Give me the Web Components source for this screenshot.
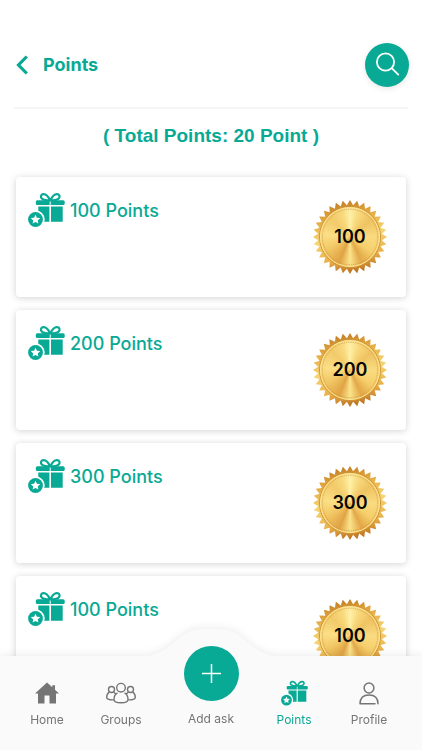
<!DOCTYPE html>
<html lang="en">
<head>
<meta charset="utf-8">
<meta name="viewport" content="width=device-width, initial-scale=1">
<title>Points</title>
<style>
  html, body { height: 100%; margin: 0; }
  body {
    --brand: #08a995;
    --muted: #757575;
    --bar: #fafafa;
    background: #fff;
    font-family: Inter, "Open Sans", sans-serif;
  }
</style>
</head>
<body>
<points-app></points-app>
<script>
const define = (name, html, setup) => {
  const template = document.createElement('template');
  template.innerHTML = html;
  customElements.define(name, class extends HTMLElement {
    connectedCallback() {
      if (this.shadowRoot) return;
      this.attachShadow({ mode: 'open' }).append(template.content.cloneNode(true));
      if (setup) setup(this, this.shadowRoot);
    }
  });
};

/* Gift box with a star badge */
define('gift-icon', `
  <style>
    :host { display: block; width: 37px; flex: none; color: var(--brand); }
    svg { display: block; width: 100%; }
  </style>
  <svg viewBox="0 0 37 36" fill="currentColor" aria-hidden="true">
    <path d="M22 8.300C20 4 17.500 2 15.300 2.200c-2.600.2-3.200 3.300-1.200 4.600C15.800 8 19 8.300 22 8.300ZM22.500 8.300C24.500 4 27 2 29.200 2.200c2.600.2 3.200 3.300 1.200 4.600C28.700 8 25.500 8.300 22.500 8.300Z" fill="none" stroke="currentColor" stroke-width="2.200"/>
    <path d="M9.300 8.300H21.700V13H9.300A1.500 1.500 0 0 1 7.800 11.500V9.800A1.500 1.500 0 0 1 9.300 8.300ZM22.700 8.300H35.200A1.500 1.500 0 0 1 36.700 9.800V11.500A1.500 1.500 0 0 1 35.200 13H22.700Z"/>
    <path d="M10.300 14.500H21.400V29.700H10.300ZM23 14.500H34.700V29.700H23Z"/>
    <circle cx="7.500" cy="27.500" r="9.200" fill="var(--gift-bg, #fff)"/>
    <circle cx="7.500" cy="27.500" r="7.400"/>
    <path fill="var(--gift-bg, #fff)" d="M7.500 22.700l1.400 3 3.300.4-2.400 2.300.6 3.200-2.900-1.600-2.900 1.600.6-3.200-2.400-2.300 3.300-.4z"/>
  </svg>`);

/* Serrated gold seal with the value in the middle */
define('gold-medal', `
  <style>
    :host { display: grid; width: 74px; height: 74px; flex: none; place-items: center; }
    svg, span { grid-area: 1 / 1; }
    svg { width: 100%; height: 100%; }
    span { z-index: 1; color: #090703; font-size: 18px; line-height: 24px; font-weight: 600; }
    .face {
      grid-area: 1 / 1; width: 60px; height: 60px; border-radius: 50%;
      background:
        radial-gradient(circle, transparent 55%, #d6922a33 100%),
        conic-gradient(#fff0a8, #f8da7e 20deg, #efc362 50deg, #fadb80 90deg, #f6cf6c 125deg, #e3a848 155deg, #fbe48c 180deg, #e0a344 203deg, #f2c765 240deg, #fbdf86 275deg, #f2ca6a 315deg, #f8da7e 342deg, #fff0a8);
    }
  </style>
  <svg viewBox="0 0 74 74" aria-hidden="true">
    <defs>
      <linearGradient id="edge" x1=".35" y1="0" x2=".55" y2="1">
        <stop offset="0" stop-color="#bf7a20"/><stop offset=".22" stop-color="#e3a840"/>
        <stop offset=".5" stop-color="#f7d574"/><stop offset=".78" stop-color="#e9b04a"/>
        <stop offset="1" stop-color="#b86c1b"/>
      </linearGradient>
    </defs>
    <polygon fill="url(#edge)"/>
  </svg>
  <div class="face"></div>
  <svg viewBox="0 0 74 74" fill="none" aria-hidden="true">
    <circle cx="37" cy="37" r="30.500" stroke="#d09638" stroke-width="1"/>
    <circle cx="37" cy="37" r="29.500" stroke="#ffe596" stroke-width="1"/>
    <circle cx="37" cy="37" r="27.800" stroke="#c98f33" stroke-width=".7" stroke-dasharray="1.500 .8" opacity=".8"/>
  </svg>
  <span><slot></slot></span>`, (host, root) => {
  const teeth = 32, points = [];
  for (let i = 0; i < teeth * 2; i++) {
    const r = i % 2 ? 32 : 37, a = i * Math.PI / teeth - Math.PI / 2;
    points.push((37 + r * Math.cos(a)).toFixed(2) + ',' + (37 + r * Math.sin(a)).toFixed(2));
  }
  root.querySelector('polygon').setAttribute('points', points.join(' '));
});

define('reward-card', `
  <style>
    :host {
      display: flex; justify-content: space-between; align-items: center;
      box-sizing: border-box; min-height: 120px; padding: 12px 19px 12px 12px;
      background: #fff; border-radius: 4px; box-shadow: 0 1px 7px #0000002e;
    }
    h2 {
      display: flex; align-items: center; align-self: flex-start; gap: 5px;
      margin: 2px 0 0; color: var(--brand); font-size: 18px; line-height: 36px; font-weight: 500;
    }
    .label { padding-top: 2px; }
  </style>
  <h2><gift-icon></gift-icon><span class="label"><slot></slot></span></h2>
  <gold-medal></gold-medal>`, (host, root) => {
  root.querySelector('gold-medal').textContent = host.getAttribute('value');
});

define('page-header', `
  <style>
    :host {
      display: flex; align-items: center; gap: 12px; flex: none;
      margin: 0 14px; padding: 43px 0 20px; border-bottom: 2px solid #f5f5f5; color: var(--brand);
    }
    button { border: 0; padding: 0; background: none; color: inherit; cursor: pointer; }
    svg { display: block; }
    h1 { flex: 1; margin: 0; font-size: 18px; line-height: 24px; font-weight: 700; }
    .search {
      width: 44px; height: 44px; margin-right: -1px; border-radius: 50%; background: var(--brand); color: #fff;
      box-shadow: 0 2px 6px #00000018;
    }
  </style>
  <button aria-label="Back"><svg width="17" height="24" viewBox="0 0 17 24" fill="none" stroke="currentColor" stroke-width="3.200"><path d="M12.800 3.500 4.500 12l8.300 8.500"/></svg></button>
  <h1><slot></slot></h1>
  <button class="search" aria-label="Search"><svg width="44" height="44" viewBox="0 0 44 44" fill="none" stroke="currentColor" stroke-width="1.800" stroke-linecap="round"><circle cx="20.500" cy="19" r="8.600"/><path d="m26.700 25.200 6.600 6.400"/></svg></button>`);

define('nav-item', `
  <style>
    :host { display: block; color: var(--muted); }
    :host([active]) { color: var(--brand); }
    a {
      display: flex; flex-direction: column; align-items: center; gap: 5px;
      color: inherit; text-decoration: none; font-size: 12px; line-height: 16px; white-space: nowrap;
    }
    .icon { display: grid; place-items: center; height: 28px; }
  </style>
  <a href="#"><span class="icon"><slot name="icon"></slot></span><slot></slot></a>`);

define('tab-bar', `
  <style>
    :host {
      display: grid; grid-template-columns: 74fr 74fr 106fr 60fr 90fr; position: relative; flex: none;
      padding: 23px 8px 22px 10px; background: var(--bar); --gift-bg: var(--bar);
      filter: drop-shadow(0 -1px 4px #00000014);
    }
    .hump { position: absolute; left: 50%; bottom: 100%; width: 140px; margin: 0 0 -1px -70px; fill: var(--bar); }
    svg { display: block; }
    gift-icon { width: 27px; }
    .add {
      display: flex; flex-direction: column; align-items: center; gap: 10px;
      margin: -33px 0 0; padding: 0; border: 0; background: none;
      color: var(--muted); font: inherit; font-size: 12px; line-height: 16px; cursor: pointer; position: relative;
    }
    .disc { width: 55px; height: 55px; border-radius: 50%; background: var(--brand); color: #fff; }
  </style>
  <svg class="hump" viewBox="0 0 140 28" aria-hidden="true"><path d="M0 28C30 26 36 4 54 1Q70-1 86 1C104 4 110 26 140 28Z"/></svg>
  <nav-item>
    <svg slot="icon" width="24" height="22" viewBox="0 0 24 22" fill="currentColor"><path d="M12 .5 17.300 5.300V3.300H20V7.800L24 11.500H21V21.500H14.500V13.500H9.500V21.500H3V11.500H0Z"/></svg>Home
  </nav-item>
  <nav-item>
    <svg slot="icon" width="30" height="22" viewBox="0 0 30 22" fill="none" stroke="currentColor" stroke-width="1.400">
      <circle cx="15" cy="5.700" r="4.300"/><circle cx="5.500" cy="7.500" r="3"/><circle cx="24.500" cy="7.500" r="3"/>
      <path d="M11.500 10.800C9 12 8 15 8 17.500 8 19.600 11 20.800 15 20.800s7-1.200 7-3.300c0-2.500-1-5.500-3.500-6.700M3.200 10.200C1.300 11.500.7 13.500.7 15.500c0 1.500 2.800 2.600 7 2.300M7.800 10.200 9.500 11.800M26.800 10.200c1.900 1.300 2.500 3.300 2.500 5.300 0 1.500-2.800 2.600-7 2.300M22.200 10.200 20.500 11.800"/>
    </svg>Groups
  </nav-item>
  <button class="add"><svg class="disc" viewBox="0 0 55 55" fill="none" stroke="currentColor" stroke-width="1.500"><path d="M27.500 18v19M18 27.500h19"/></svg>Add ask</button>
  <nav-item active><gift-icon slot="icon"></gift-icon>Points</nav-item>
  <nav-item>
    <svg slot="icon" width="20" height="23" viewBox="0 0 20 23" fill="none" stroke="currentColor" stroke-width="1.500" stroke-linecap="round" stroke-linejoin="round"><circle cx="10" cy="6" r="4.900"/><path d="M16 21.800H1C1 16 4.500 12.900 10 12.900s9 3.100 9 8.900"/></svg>Profile
  </nav-item>`);

define('points-app', `
  <style>
    :host { display: flex; flex-direction: column; height: 100vh; overflow: hidden; }
    main { flex: 1; min-height: 0; overflow: hidden; }
    .total { margin: 14px 0 28px; text-align: center; color: var(--brand); font: bold 19px/26px "Liberation Sans", Arial, sans-serif; }
    .list { display: grid; gap: 13px; padding: 0 16px; }
  </style>
  <page-header>Points</page-header>
  <main>
    <p class="total">( Total Points: 20 Point )</p>
    <div class="list">
      <reward-card value="100">100 Points</reward-card>
      <reward-card value="200">200 Points</reward-card>
      <reward-card value="300">300 Points</reward-card>
      <reward-card value="100">100 Points</reward-card>
    </div>
  </main>
  <tab-bar></tab-bar>`);
</script>
</body>
</html>
